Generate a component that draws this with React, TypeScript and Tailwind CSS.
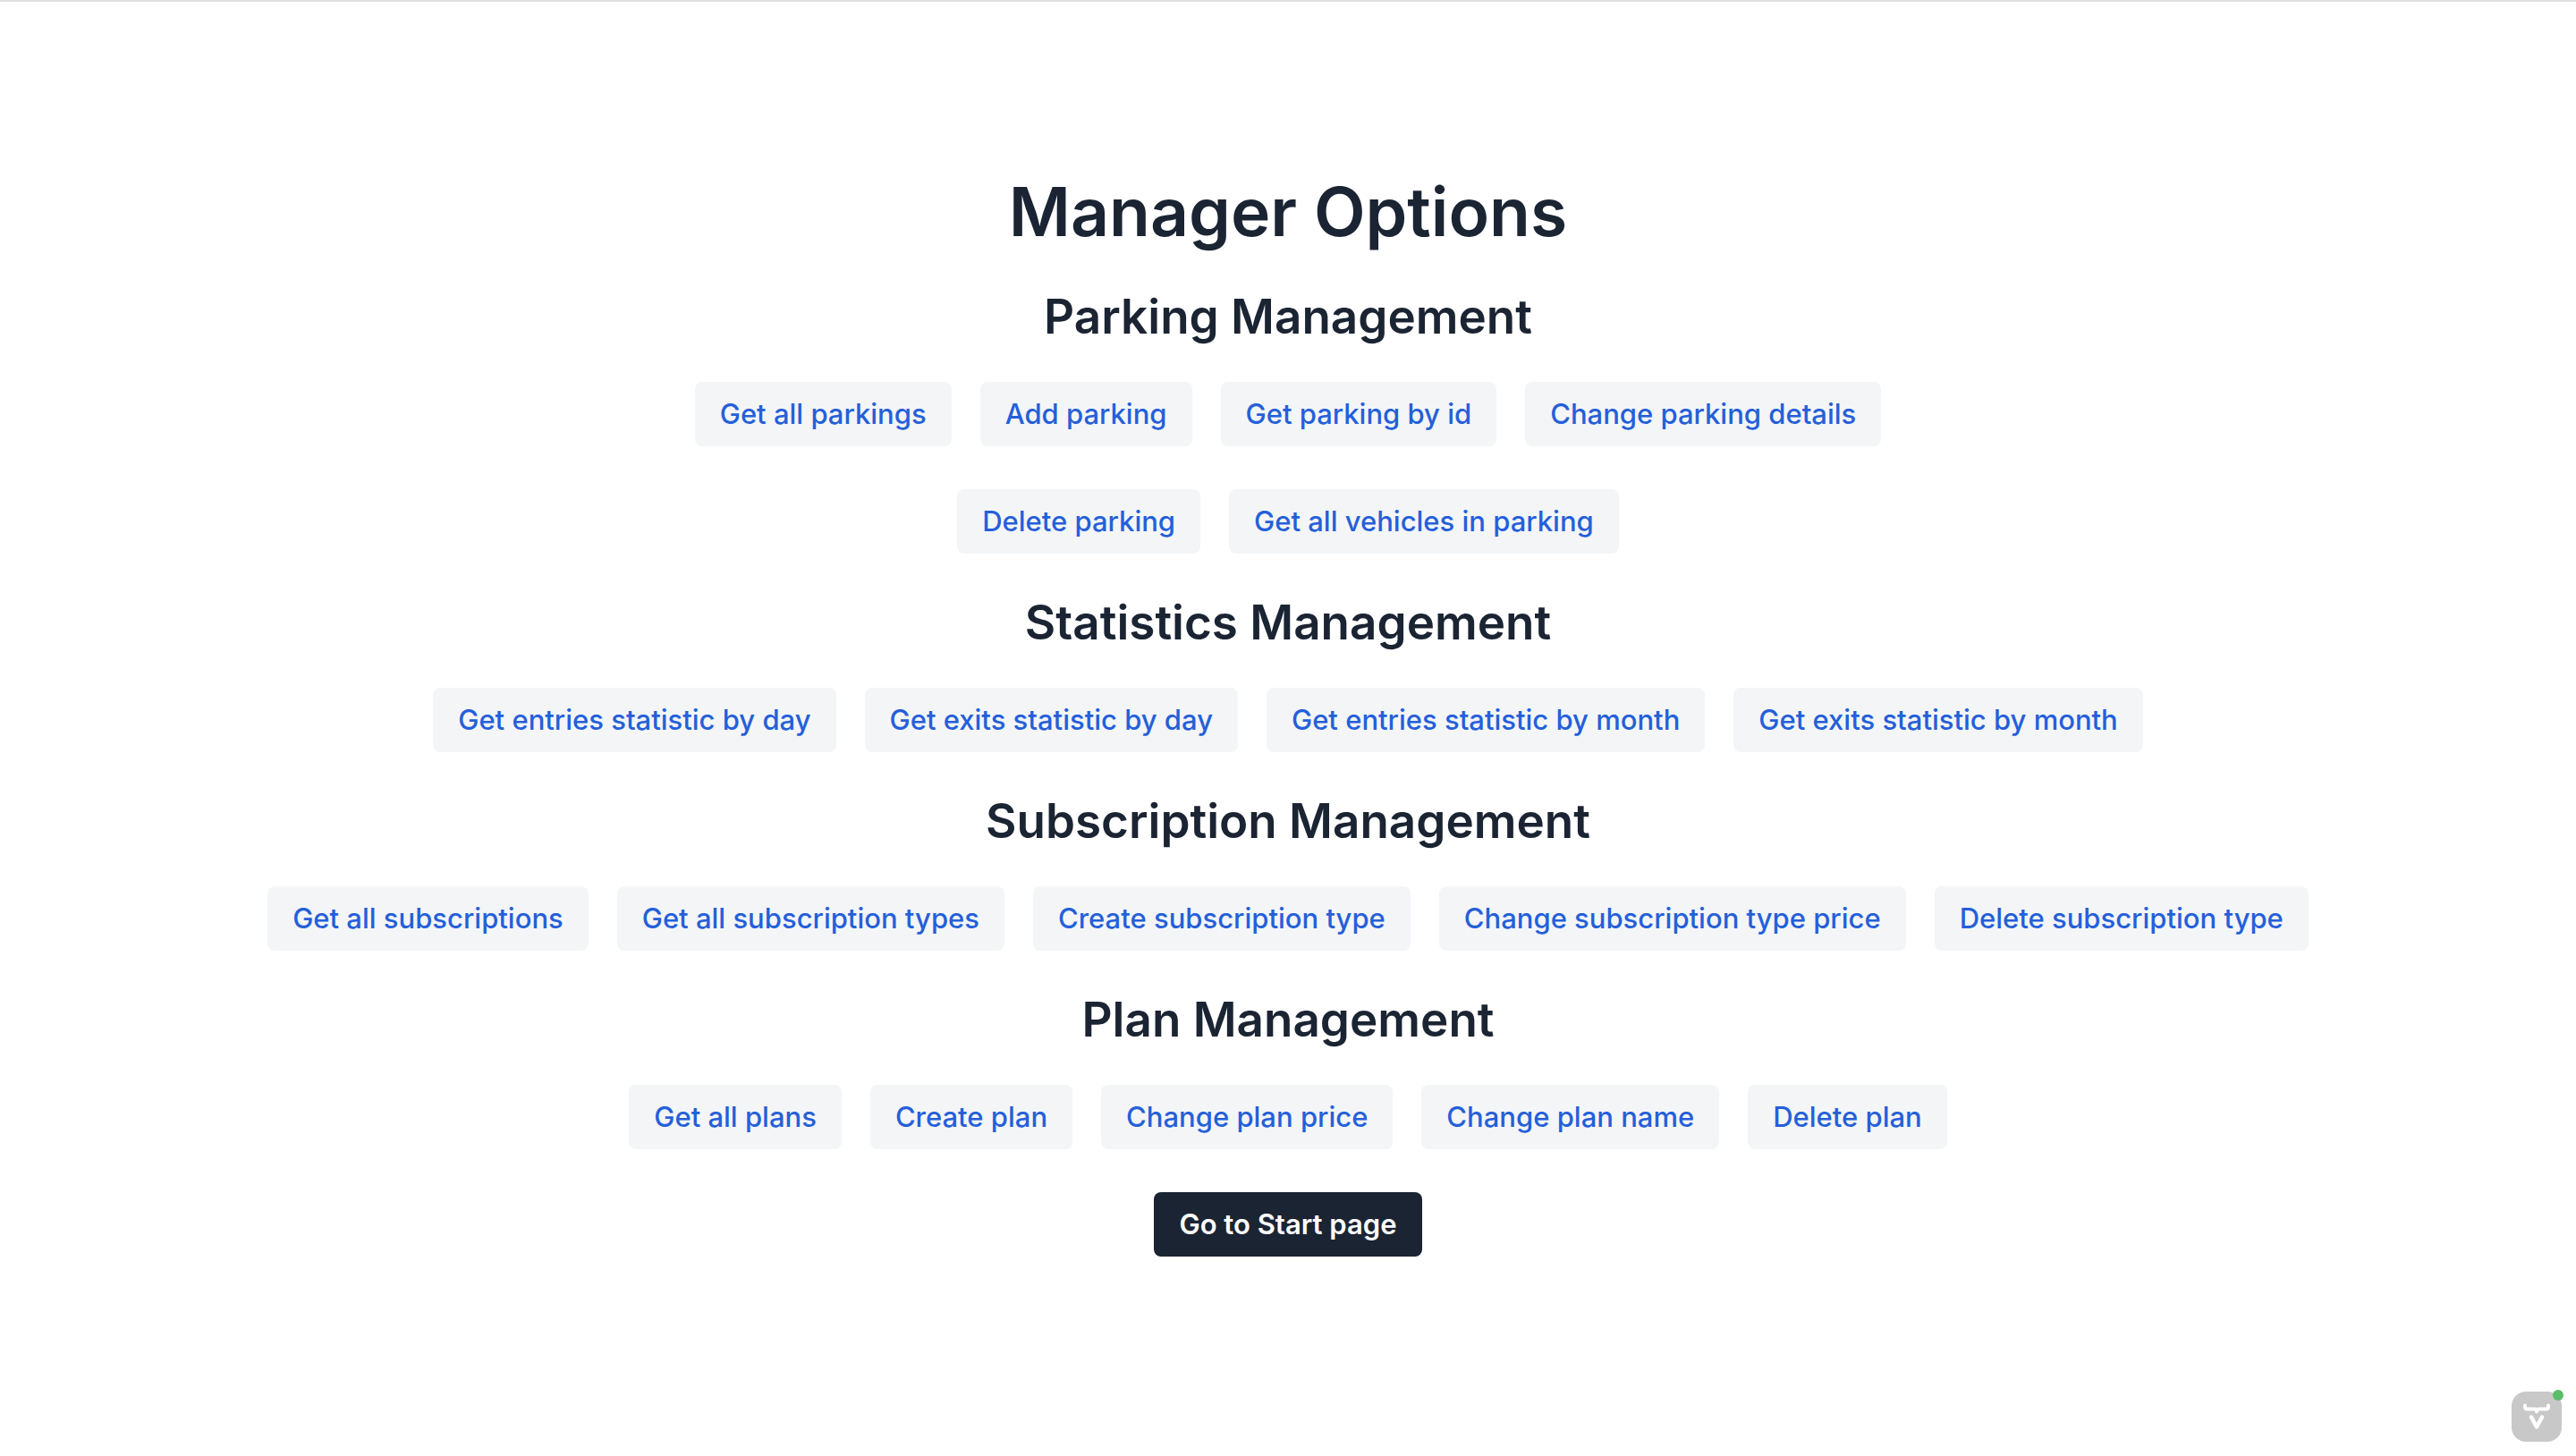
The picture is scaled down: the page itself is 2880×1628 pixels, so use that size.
import React from "react";

const sections = [
  {
    title: "Parking Management",
    rows: [
      ["Get all parkings", "Add parking", "Get parking by id", "Change parking details"],
      ["Delete parking", "Get all vehicles in parking"],
    ],
  },
  {
    title: "Statistics Management",
    rows: [["Get entries statistic by day", "Get exits statistic by day", "Get entries statistic by month", "Get exits statistic by month"]],
  },
  {
    title: "Subscription Management",
    rows: [["Get all subscriptions", "Get all subscription types", "Create subscription type", "Change subscription type price", "Delete subscription type"]],
  },
  {
    title: "Plan Management",
    rows: [["Get all plans", "Create plan", "Change plan price", "Change plan name", "Delete plan"]],
  },
];

export default function App() {
  return (
    <div className="min-h-screen border-t-2 border-[#e0e0e0] bg-white font-['Inter',sans-serif] text-[#1b2433]">
      <main className="flex flex-col items-center pt-[185px]">
        <h1 className="mb-3.5 text-[75px] leading-[100px] font-semibold">Manager Options</h1>
        {sections.map((s) => (
          <section key={s.title} className="flex flex-col items-center pt-4.5">
            <h2 className="pb-3.5 text-[53px] leading-[70px] font-semibold">{s.title}</h2>
            {s.rows.map((row) => (
              <div key={row[0]} className="flex justify-center gap-8 py-6">
                {row.map((label) => (
                  <button key={label} type="button" className="h-[72px] rounded-lg bg-[#f3f5f7] px-7 text-[31px] font-medium text-[#255fd9]">
                    {label}
                  </button>
                ))}
              </div>
            ))}
          </section>
        ))}
        <button type="button" className="mt-6 h-[72px] rounded-lg bg-[#1b2433] px-7 text-[31px] font-semibold text-white">
          Go to Start page
        </button>
      </main>
      <button type="button" aria-label="Developer tools" className="fixed right-4 bottom-4 size-14 rounded-2xl bg-[#c8c8c8]">
        <svg viewBox="0 0 56 56" className="size-14" fill="none" stroke="#fff" strokeLinecap="round" strokeLinejoin="round">
          <path d="M15 15.500v2q0 2 2.500 2h7.500q3 0 3 3q0-3 3-3h7.500q2.500 0 2.500-2v-2" strokeWidth="3.800" />
          <path d="M22 28.500l6 11l6-11" strokeWidth="4.500" />
        </svg>
        <span className="absolute -top-0.5 -right-0.5 size-3 rounded-full bg-[#5abd68]" />
      </button>
    </div>
  );
}
